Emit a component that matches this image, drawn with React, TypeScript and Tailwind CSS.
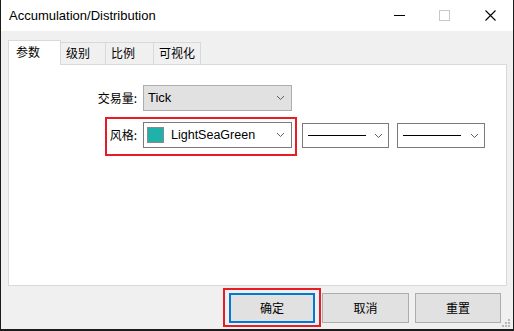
import React from 'react';

const latin = { fontFamily: '"Liberation Sans", "Noto Sans CJK SC", sans-serif' };
const cjk = { fontFamily: '"Noto Sans CJK SC", "Liberation Sans", sans-serif' };

const Chevron = () => (
  <svg width="9" height="6" viewBox="0 0 9 6" className="shrink-0">
    <path d="M1 1 L4.5 4.5 L8 1" fill="none" stroke="#5f5f5f" strokeWidth="1" />
  </svg>
);

const LineSelect = ({ width }: { width: string }) => (
  <div className={`${width} h-[25px] mt-[6px] bg-white border border-[#7a7a7a] flex items-center pl-[5px] pr-[5px]`}>
    <div className="w-[58px] h-[1px] bg-black" />
    <div className="flex-1" />
    <Chevron />
  </div>
);

const tabs = [
  { label: '参数', w: 'w-[53px]', active: true },
  { label: '级别', w: 'w-[46px]', active: false },
  { label: '比例', w: 'w-[49px]', active: false },
  { label: '可视化', w: 'w-[48px]', active: false },
];

export default function App() {
  return (
    <div className="w-[514px] h-[331px] bg-[#1c1c1c] overflow-hidden relative">
      <div className="ml-[1px] w-[512px] h-[329px] bg-[#f0f0f0] flex flex-col relative">
        {/* title bar */}
        <div className="h-[31px] bg-white flex items-center shrink-0">
          <span className="ml-[8px] text-[13px] text-black" style={latin}>
            Accumulation/Distribution
          </span>
          <div className="flex-1" />
          <svg width="11" height="2" viewBox="0 0 11 2" className="mr-[34px]">
            <rect x="0" y="0" width="11" height="1" fill="#000" />
          </svg>
          <svg width="11" height="11" viewBox="0 0 11 11" className="mr-[35px]">
            <rect x="0.5" y="0.5" width="10" height="10" fill="none" stroke="#c8c8c8" />
          </svg>
          <svg width="11" height="11" viewBox="0 0 11 11" className="mr-[17px]">
            <path d="M0.5 0.5 L10.5 10.5 M10.5 0.5 L0.5 10.5" stroke="#000" strokeWidth="1.1" />
          </svg>
        </div>

        {/* tabs */}
        <div className="mt-[9px] ml-[7px] flex items-end h-[24px] relative z-10">
          {tabs.map((t, i) => (
            <div
              key={t.label}
              className={`${t.w} ${i > 0 ? 'ml-[-1px]' : ''} ${
                t.active
                  ? 'h-[25px] mb-[-1px] bg-white border border-b-0 border-[#d9d9d9] z-10 pl-[7px] pt-[3px]'
                  : 'h-[22px] bg-[#f0f0f0] border border-b-0 border-[#d9d9d9] pl-[5px] pt-[2px]'
              } text-[12px] text-black leading-[16px]`}
              style={cjk}
            >
              {t.label}
            </div>
          ))}
        </div>

        {/* panel */}
        <div className="ml-[7px] w-[499px] h-[222px] bg-white border border-[#d9d9d9] pt-[20px] shrink-0">
          <div className="flex items-center">
            <div className="w-[128px] text-right text-[12px] text-black" style={cjk}>
              交易量:
            </div>
            <div className="ml-[6px] w-[149px] h-[26px] bg-[#e1e1e1] border border-[#adadad] flex items-center pl-[4px] pr-[6px]">
              <span className="text-[13px] text-black" style={latin}>
                Tick
              </span>
              <div className="flex-1" />
              <Chevron />
            </div>
          </div>

          <div className="flex items-start mt-[6px]">
            <div className="ml-[96px] w-[192px] h-[39px] border-2 border-[#e81c24] flex items-start pt-[3px]">
              <div className="w-[30px] h-[26px] flex items-center justify-end text-[12px] text-black" style={cjk}>
                风格:
              </div>
              <div className="ml-[6px] w-[149px] h-[26px] bg-white border border-[#7a7a7a] flex items-center pl-[3px] pr-[6px]">
                <div className="w-[17px] h-[16px] bg-[#20b2aa] border border-[#8a8a8a]" />
                <span className="ml-[7px] text-[12.5px] text-black" style={latin}>
                  LightSeaGreen
                </span>
                <div className="flex-1" />
                <Chevron />
              </div>
            </div>
            <div className="ml-[5px]">
              <LineSelect width="w-[87px]" />
            </div>
            <div className="ml-[8px]">
              <LineSelect width="w-[88px]" />
            </div>
          </div>
        </div>

        {/* buttons */}
        <div className="mt-[2px] ml-[222px] flex items-start">
          <div className="w-[98px] h-[39px] border-2 border-[#e81c24] pl-[4px] pt-[3px]">
            <button
              className="w-[86px] h-[30px] bg-[#e1e1e1] border-2 border-[#0078d7] text-[12px] text-black"
              style={cjk}
            >
              确定
            </button>
          </div>
          <button
            className="ml-[1px] mt-[5px] w-[87px] h-[30px] bg-[#e1e1e1] border border-[#adadad] text-[12px] text-black"
            style={cjk}
          >
            取消
          </button>
          <button
            className="ml-[6px] mt-[5px] w-[86px] h-[30px] bg-[#e1e1e1] border border-[#adadad] text-[12px] text-black"
            style={cjk}
          >
            重置
          </button>
        </div>

        {/* size grip */}
        <svg width="10" height="10" viewBox="0 0 10 10" className="absolute right-[2px] bottom-[1px]">
          {[
            [7, 1],
            [4, 4],
            [7, 4],
            [1, 7],
            [4, 7],
            [7, 7],
          ].map(([x, y]) => (
            <rect key={`${x}-${y}`} x={x} y={y} width="2" height="2" fill="#b8b8b8" />
          ))}
        </svg>
      </div>
    </div>
  );
}
